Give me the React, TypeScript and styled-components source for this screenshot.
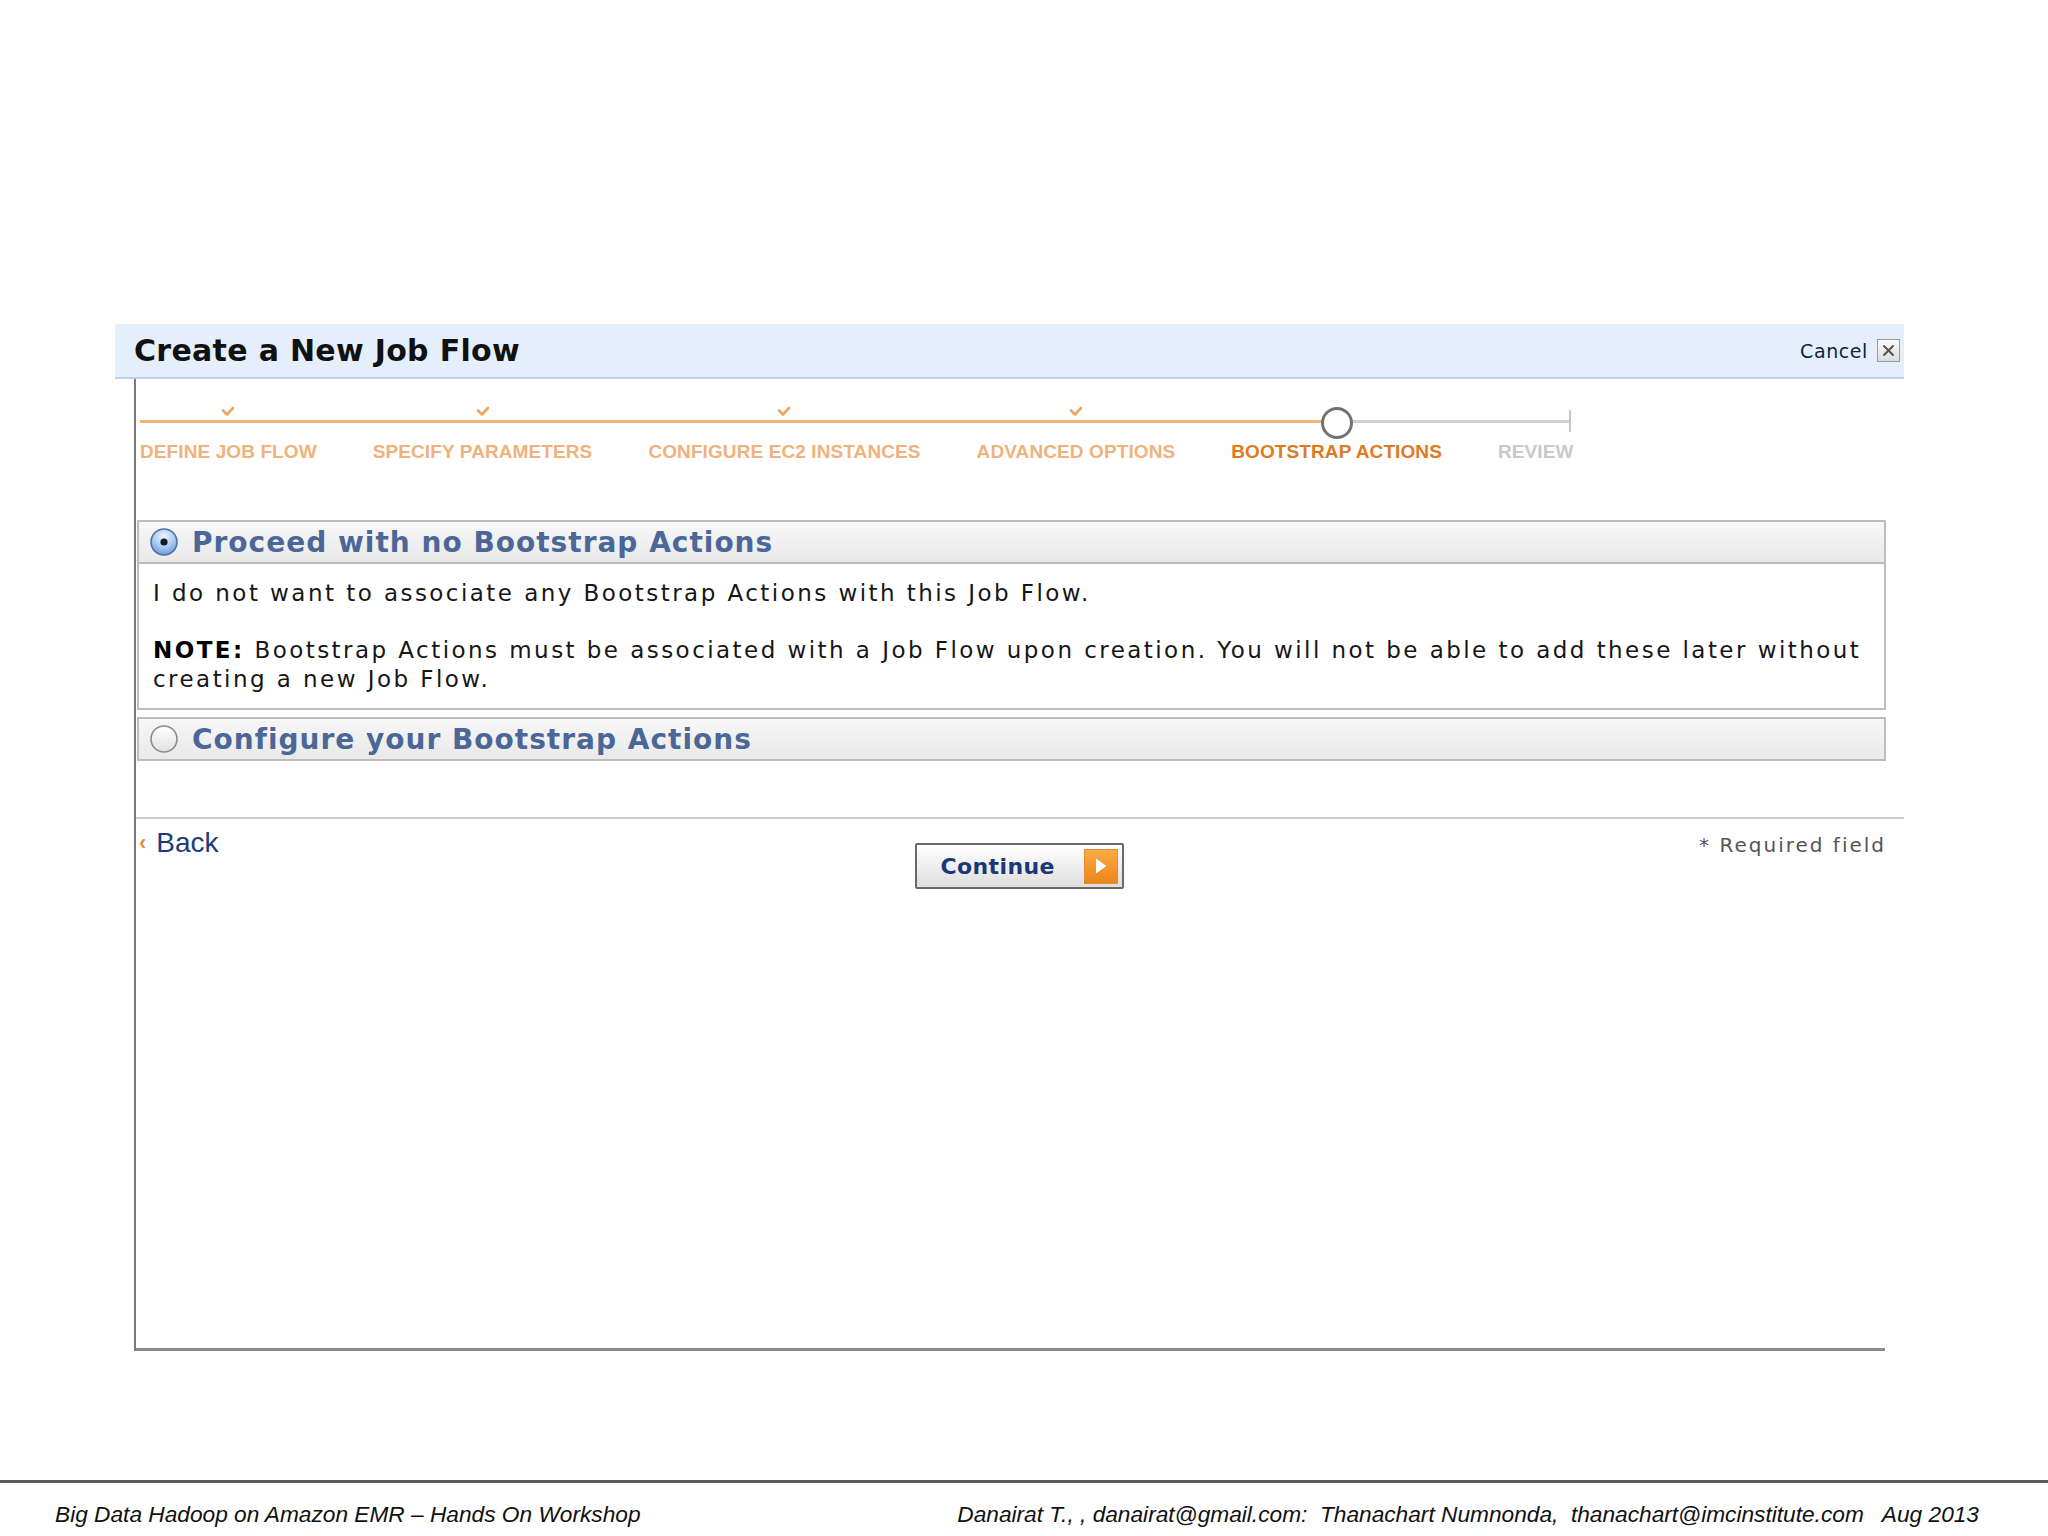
import React from 'react';
import styled, { createGlobalStyle } from 'styled-components';

const GlobalStyle = createGlobalStyle`
  html, body {
    margin: 0;
    padding: 0;
    background: #fefefe;
  }
`;

const VERDANA = `"DejaVu Sans", Verdana, sans-serif`;
const ARIAL = `"Liberation Sans", Arial, sans-serif`;

type StepState = 'done' | 'active' | 'todo';

const steps: { label: string; state: StepState }[] = [
  { label: 'DEFINE JOB FLOW', state: 'done' },
  { label: 'SPECIFY PARAMETERS', state: 'done' },
  { label: 'CONFIGURE EC2 INSTANCES', state: 'done' },
  { label: 'ADVANCED OPTIONS', state: 'done' },
  { label: 'BOOTSTRAP ACTIONS', state: 'active' },
  { label: 'REVIEW', state: 'todo' },
];

const labelColors: Record<StepState, string> = {
  done: '#f0b27c',
  active: '#e07a1f',
  todo: '#c9c9c9',
};

const CheckMark: React.FC = () => (
  <svg width="14" height="11" viewBox="0 0 14 11">
    <path d="M2 4.5 L6 8.5 L12 2" fill="none" stroke="#eea362" strokeWidth="2.6" strokeLinecap="round" strokeLinejoin="round" />
  </svg>
);

const Radio: React.FC<{ checked?: boolean }> = ({ checked }) => (
  <svg width="30" height="30" viewBox="0 0 30 30">
    <defs>
      <radialGradient id="radioOn" cx="50%" cy="30%" r="75%">
        <stop offset="0%" stopColor="#eef5ff" />
        <stop offset="55%" stopColor="#a9c8f2" />
        <stop offset="100%" stopColor="#5d8ed6" />
      </radialGradient>
      <linearGradient id="radioOff" x1="0" y1="0" x2="0" y2="1">
        <stop offset="0%" stopColor="#ffffff" />
        <stop offset="100%" stopColor="#e2e2e2" />
      </linearGradient>
    </defs>
    {checked ? (
      <>
        <circle cx="15" cy="15" r="13" fill="url(#radioOn)" stroke="#4e72a6" strokeWidth="1.6" />
        <circle cx="15" cy="15" r="3.6" fill="#15182a" />
      </>
    ) : (
      <circle cx="15" cy="15" r="13" fill="url(#radioOff)" stroke="#8c8c8c" strokeWidth="1.6" />
    )}
  </svg>
);

const App: React.FC = () => {
  return (
    <Page>
      <GlobalStyle />
      <Dialog>
        <DialogHeader>
          <Title>Create a New Job Flow</Title>
          <CancelLink>
            Cancel
            <CloseBox>
              <svg width="13" height="13" viewBox="0 0 13 13">
                <path d="M2 2 L11 11 M11 2 L2 11" stroke="#555" strokeWidth="2" strokeLinecap="round" />
              </svg>
            </CloseBox>
          </CancelLink>
        </DialogHeader>

        <DialogBody>
          <StepBar>
            <TrackDone />
            <TrackTodo />
            <TrackEnd />
            {steps.map(step => (
              <Step key={step.label}>
                <Marker>
                  {step.state === 'done' && (
                    <CheckHolder>
                      <CheckMark />
                    </CheckHolder>
                  )}
                  {step.state === 'active' && <CurrentDot />}
                </Marker>
                <StepLabel state={step.state}>{step.label}</StepLabel>
              </Step>
            ))}
          </StepBar>

          <Panels>
            <Panel>
              <PanelHeader>
                <Radio checked />
                <PanelTitle>Proceed with no Bootstrap Actions</PanelTitle>
              </PanelHeader>
              <PanelBody>
                <Para>I do not want to associate any Bootstrap Actions with this Job Flow.</Para>
                <Para>
                  <strong>NOTE:</strong> Bootstrap Actions must be associated with a Job Flow upon creation. You will
                  not be able to add these later without
                  <br />
                  creating a new Job Flow.
                </Para>
              </PanelBody>
            </Panel>

            <Panel>
              <PanelHeader>
                <Radio />
                <PanelTitle>Configure your Bootstrap Actions</PanelTitle>
              </PanelHeader>
            </Panel>
          </Panels>

          <Separator />

          <ActionRow>
            <BackLink>
              <Chevron>‹</Chevron>Back
            </BackLink>
            <ContinueButton>
              Continue
              <ArrowBox>
                <svg width="14" height="18" viewBox="0 0 14 18">
                  <path d="M2 1.5 L12.5 9 L2 16.5 Z" fill="#ffffff" />
                </svg>
              </ArrowBox>
            </ContinueButton>
            <Required>* Required field</Required>
          </ActionRow>

          <BottomRule />
        </DialogBody>
      </Dialog>

      <FooterRule />
      <Footer>
        <FooterText>Big Data Hadoop on Amazon EMR – Hands On Workshop</FooterText>
        <FooterText>
          Danairat T., , danairat@gmail.com:&nbsp; Thanachart Numnonda,&nbsp; thanachart@imcinstitute.com&nbsp;&nbsp; Aug
          2013
        </FooterText>
      </Footer>
    </Page>
  );
};

const Page = styled.div`
  width: 2048px;
  height: 1536px;
  display: flex;
  flex-direction: column;
  overflow: hidden;
  background: #fefefe;
`;

const Dialog = styled.div`
  margin: 324px 0 0 115px;
  width: 1789px;
  display: flex;
  flex-direction: column;
`;

const DialogHeader = styled.div`
  height: 53px;
  display: flex;
  align-items: center;
  justify-content: space-between;
  padding: 0 4px 0 19px;
  background: #e4effb;
  border-bottom: 2px solid #bcd2ec;
`;

const Title = styled.h1`
  margin: 0;
  font-family: ${VERDANA};
  font-weight: bold;
  font-size: 30px;
  letter-spacing: 0.3px;
  color: #111;
`;

const CancelLink = styled.div`
  display: flex;
  align-items: center;
  gap: 9px;
  font-family: ${VERDANA};
  font-size: 19px;
  letter-spacing: 0.6px;
  color: #0f1f44;
`;

const CloseBox = styled.span`
  width: 21px;
  height: 21px;
  display: flex;
  align-items: center;
  justify-content: center;
  border: 1px solid #9a9a9a;
  background: linear-gradient(#fbfbfb, #dcdcdc);
`;

const DialogBody = styled.div`
  margin-left: 19px;
  height: 972px;
  display: flex;
  flex-direction: column;
  border-left: 2px solid #7a7a7a;
`;

const StepBar = styled.div`
  position: relative;
  display: flex;
  gap: 56px;
  padding: 28px 0 0 4px;
`;

const TrackDone = styled.div`
  position: absolute;
  left: 4px;
  top: 41px;
  width: 1195px;
  height: 3px;
  background: #f4b27a;
`;

const TrackTodo = styled.div`
  position: absolute;
  left: 1199px;
  top: 41px;
  width: 236px;
  height: 3px;
  background: #d2d2d2;
`;

const TrackEnd = styled.div`
  position: absolute;
  left: 1433px;
  top: 31px;
  width: 2px;
  height: 22px;
  background: #c6c6c6;
`;

const Step = styled.div`
  position: relative;
  display: flex;
  flex-direction: column;
  align-items: center;
`;

const Marker = styled.div`
  height: 30px;
  width: 100%;
  display: flex;
  justify-content: center;
`;

const CheckHolder = styled.div`
  margin-top: -4px;
  height: 12px;
`;

const CurrentDot = styled.div`
  position: relative;
  width: 26px;
  height: 26px;
  border: 3px solid #737373;
  border-radius: 50%;
  background: #fff;

  &::before {
    content: '';
    position: absolute;
    right: 14px;
    top: 2px;
    width: 40px;
    height: 22px;
    border-radius: 50%;
    background: radial-gradient(ellipse at 80% 50%, rgba(245, 160, 90, 0.75), rgba(245, 175, 110, 0) 70%);
    filter: blur(2px);
    z-index: -1;
  }
`;

const StepLabel = styled.div<{ state: StepState }>`
  margin-top: 4px;
  font-family: ${ARIAL};
  font-weight: bold;
  font-size: 19px;
  line-height: 22px;
  letter-spacing: 0.1px;
  white-space: nowrap;
  color: ${p => labelColors[p.state]};
`;

const Panels = styled.div`
  margin: 57px 0 0 1px;
  width: 1749px;
  display: flex;
  flex-direction: column;
  gap: 7px;
`;

const Panel = styled.div`
  display: flex;
  flex-direction: column;
  border: 2px solid #bcbcbc;
`;

const PanelHeader = styled.div`
  height: 40px;
  display: flex;
  align-items: center;
  gap: 13px;
  padding-left: 10px;
  background: linear-gradient(#f7f7f7, #e9e9e9);
`;

const PanelTitle = styled.span`
  font-family: ${VERDANA};
  font-weight: bold;
  font-size: 28px;
  letter-spacing: 1px;
  color: #4b6797;
`;

const PanelBody = styled.div`
  border-top: 2px solid #bcbcbc;
  padding: 15px 14px 14px;
  background: #fff;
`;

const Para = styled.p`
  margin: 0;
  font-family: ${VERDANA};
  font-size: 23px;
  line-height: 29px;
  letter-spacing: 2.45px;
  white-space: nowrap;
  color: #161616;

  & + & {
    margin-top: 28px;
  }

  strong {
    color: #000;
  }
`;

const Separator = styled.div`
  margin-top: 56px;
  height: 2px;
  background: #cbcbcb;
`;

const ActionRow = styled.div`
  width: 1750px;
  display: grid;
  grid-template-columns: 1fr auto 1fr;
  align-items: start;
`;

const BackLink = styled.a`
  margin-top: 9px;
  display: flex;
  align-items: center;
  gap: 10px;
  font-family: ${ARIAL};
  font-size: 28px;
  line-height: 30px;
  color: #1d3a7c;
  cursor: pointer;
`;

const Chevron = styled.span`
  margin-left: 3px;
  font-size: 22px;
  font-weight: bold;
  color: #e58a3c;
`;

const ContinueButton = styled.button`
  margin: 24px 0 0 16px;
  width: 209px;
  height: 46px;
  display: flex;
  align-items: center;
  justify-content: space-between;
  padding: 0 4px 0 24px;
  border: 2px solid #6a6a6a;
  border-radius: 2px;
  background: linear-gradient(#ffffff, #dedede);
  font-family: ${VERDANA};
  font-weight: bold;
  font-size: 22px;
  letter-spacing: 0.4px;
  color: #1c3776;
  cursor: pointer;
`;

const ArrowBox = styled.span`
  width: 34px;
  height: 35px;
  display: flex;
  align-items: center;
  justify-content: center;
  background: linear-gradient(#f9ab43, #ec8519);
  border: 1px solid #e18b33;
  box-sizing: border-box;
`;

const Required = styled.div`
  margin-top: 14px;
  justify-self: end;
  font-family: ${VERDANA};
  font-size: 20px;
  letter-spacing: 2px;
  color: #555;
`;

const BottomRule = styled.div`
  margin-top: auto;
  width: 1749px;
  height: 3px;
  background: #8c8c8c;
`;

const FooterRule = styled.div`
  margin-top: 129px;
  height: 3px;
  background: #5b5b5b;
`;

const Footer = styled.div`
  display: flex;
  justify-content: space-between;
  padding: 18px 69px 0 55px;
`;

const FooterText = styled.span`
  font-family: ${ARIAL};
  font-style: italic;
  font-size: 22.7px;
  color: #111;
`;

export default App;
